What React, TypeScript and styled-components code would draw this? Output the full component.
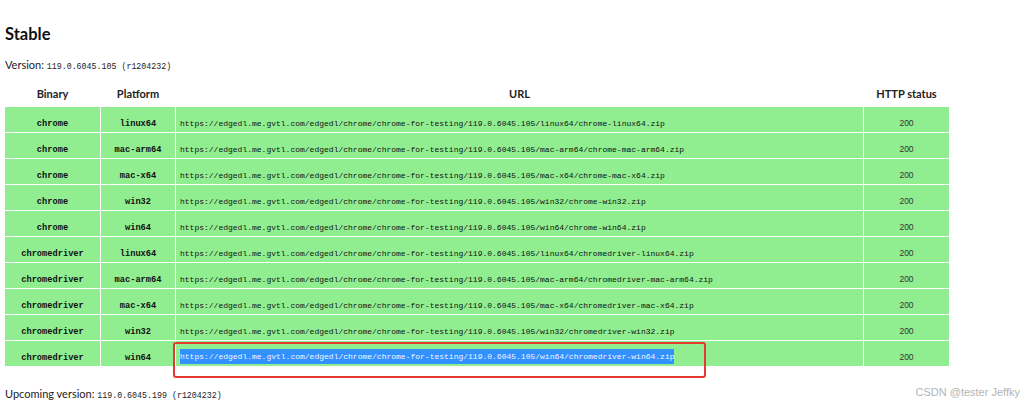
import React from "react";
import styled, { createGlobalStyle } from "styled-components";

const Global = createGlobalStyle`
  html, body { margin: 0; padding: 0; background: #fff; }
  body { font-family: Lato, "Liberation Sans", sans-serif; color: #222; }
`;

const Page = styled.div`
  position: relative;
  height: 400px;
  overflow: hidden;
  padding: 22px 0 0 4px;
  box-sizing: border-box;
`;

const Title = styled.h2`
  margin: 0 0 0 1px;
  font-family: Lato, sans-serif;
  font-weight: 700;
  font-size: 16.5px;
  line-height: 24px;
  color: #111;
`;

const VersionLine = styled.p`
  margin: 10px 0 0 1px;
  font-size: 11px;
  line-height: 18px;
  color: #222;
`;

const Code = styled.code`
  font-family: "Liberation Mono", monospace;
  font-size: 8.3px;
  color: #222;
`;

const Table = styled.table`
  margin-top: 4px;
  border-collapse: separate;
  border-spacing: 1px;
  table-layout: fixed;
  width: 946px;
`;

const Th = styled.th<{ $w: number }>`
  width: ${(p) => p.$w}px;
  height: 25px;
  padding: 0;
  font-family: Lato, sans-serif;
  font-weight: 700;
  font-size: 11px;
  color: #222;
  text-align: center;
  vertical-align: middle;
`;

const Row = styled.tr``;

const Cell = styled.td<{ $align?: string }>`
  height: 25px;
  padding: 0 4px;
  background: #90ee90;
  text-align: ${(p) => p.$align || "center"};
  vertical-align: middle;
  white-space: nowrap;
`;

const BoldMono = styled.span`
  font-family: "Liberation Mono", monospace;
  font-weight: 700;
  font-size: 8.7px;
  color: #111;
`;

const Url = styled.span`
  font-family: "Liberation Mono", monospace;
  font-size: 8px;
  color: #111;
`;

const Status = styled.span`
  font-family: "Liberation Sans", sans-serif;
  font-size: 8.5px;
  color: #333;
`;

const Selected = styled.span`
  position: relative;
  display: inline-block;
  font-family: "Liberation Mono", monospace;
  font-size: 8px;
  line-height: 15px;
  background: #3390ff;
  color: #f2f6ff;
`;

const Marker = styled.span`
  position: absolute;
  left: -7px;
  right: -32px;
  top: -7px;
  bottom: -14px;
  border: 2px solid #e23a2e;
  border-radius: 3px;
  pointer-events: none;
`;

const Upcoming = styled.p`
  margin: 18px 0 0 1px;
  font-size: 11px;
  line-height: 18px;
  color: #222;
`;

const Watermark = styled.div`
  position: absolute;
  right: 9px;
  bottom: 2px;
  font-family: "Liberation Sans", sans-serif;
  font-size: 11px;
  color: #b4b4b4;
`;

const base = "https://edgedl.me.gvtl.com/edgedl/chrome/chrome-for-testing/119.0.6045.105/";

const rows: [string, string][] = [
  ["chrome", "linux64"],
  ["chrome", "mac-arm64"],
  ["chrome", "mac-x64"],
  ["chrome", "win32"],
  ["chrome", "win64"],
  ["chromedriver", "linux64"],
  ["chromedriver", "mac-arm64"],
  ["chromedriver", "mac-x64"],
  ["chromedriver", "win32"],
  ["chromedriver", "win64"],
];

export default function App() {
  return (
    <>
      <Global />
      <Page>
        <Title>Stable</Title>
        <VersionLine>
          Version: <Code>119.0.6045.105 (r1204232)</Code>
        </VersionLine>
        <Table>
          <thead>
            <tr>
              <Th $w={95}>Binary</Th>
              <Th $w={74}>Platform</Th>
              <Th $w={687}>URL</Th>
              <Th $w={85}>HTTP status</Th>
            </tr>
          </thead>
          <tbody>
            {rows.map(([bin, plat], i) => {
              const url = `${base}${plat}/${bin}-${plat}.zip`;
              const last = i === rows.length - 1;
              return (
                <Row key={i}>
                  <Cell><BoldMono>{bin}</BoldMono></Cell>
                  <Cell><BoldMono>{plat}</BoldMono></Cell>
                  <Cell $align="left">
                    {last ? (
                      <Selected>
                        {url}
                        <Marker />
                      </Selected>
                    ) : (
                      <Url>{url}</Url>
                    )}
                  </Cell>
                  <Cell><Status>200</Status></Cell>
                </Row>
              );
            })}
          </tbody>
        </Table>
        <Upcoming>
          Upcoming version: <Code>119.0.6045.199 (r1204232)</Code>
        </Upcoming>
        <Watermark>CSDN @tester Jeffky</Watermark>
      </Page>
    </>
  );
}
